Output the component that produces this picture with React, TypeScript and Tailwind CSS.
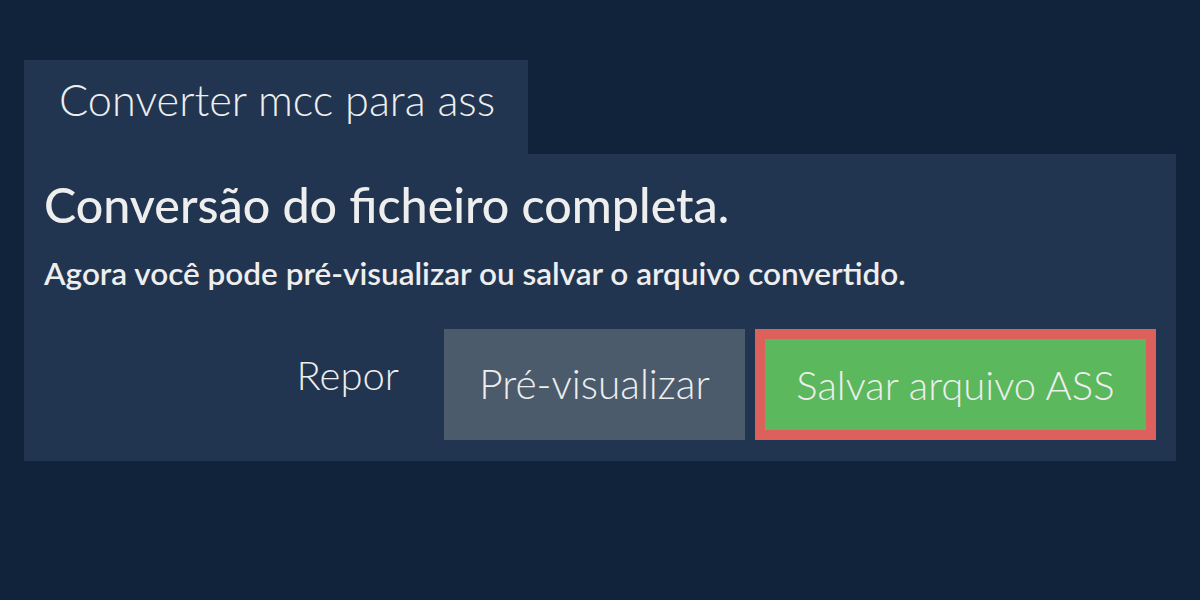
export default function App() {
  return (
    <div className="h-[600px] w-[1200px] bg-[#11233a] pl-6 pt-[60px] font-['Lato',sans-serif] text-[#eeeeee]">
      <div className="h-[94px] w-[504px] bg-[#213550] pl-[35px] pt-[18px]">
        <h1 className="text-[43.3px] font-light leading-none">Converter mcc para ass</h1>
      </div>
      <div className="w-[1152px] bg-[#213550] px-5 pb-[21px] pt-[22px]">
        <h2 className="text-[48.4px] font-medium leading-[56px]">Conversão do ficheiro completa.</h2>
        <p className="mt-[23px] text-[31.5px] font-semibold leading-[36px]">
          Agora você pode pré-visualizar ou salvar o arquivo convertido.
        </p>
        <div className="mt-[38px] flex items-stretch justify-end gap-[10px]">
          <button type="button" className="mr-[35px] self-start pt-[26px] text-[40px] font-light leading-none">
            Repor
          </button>
          <button type="button" className="h-[111px] w-[301px] bg-[#4b5b6c] text-[40.5px] font-light leading-none">
            Pré-visualizar
          </button>
          <button
            type="button"
            className="h-[111px] w-[401px] border-[10px] border-[#dc605c] bg-[#5cb85c] text-[40px] font-light leading-none"
          >
            Salvar arquivo ASS
          </button>
        </div>
      </div>
    </div>
  );
}
